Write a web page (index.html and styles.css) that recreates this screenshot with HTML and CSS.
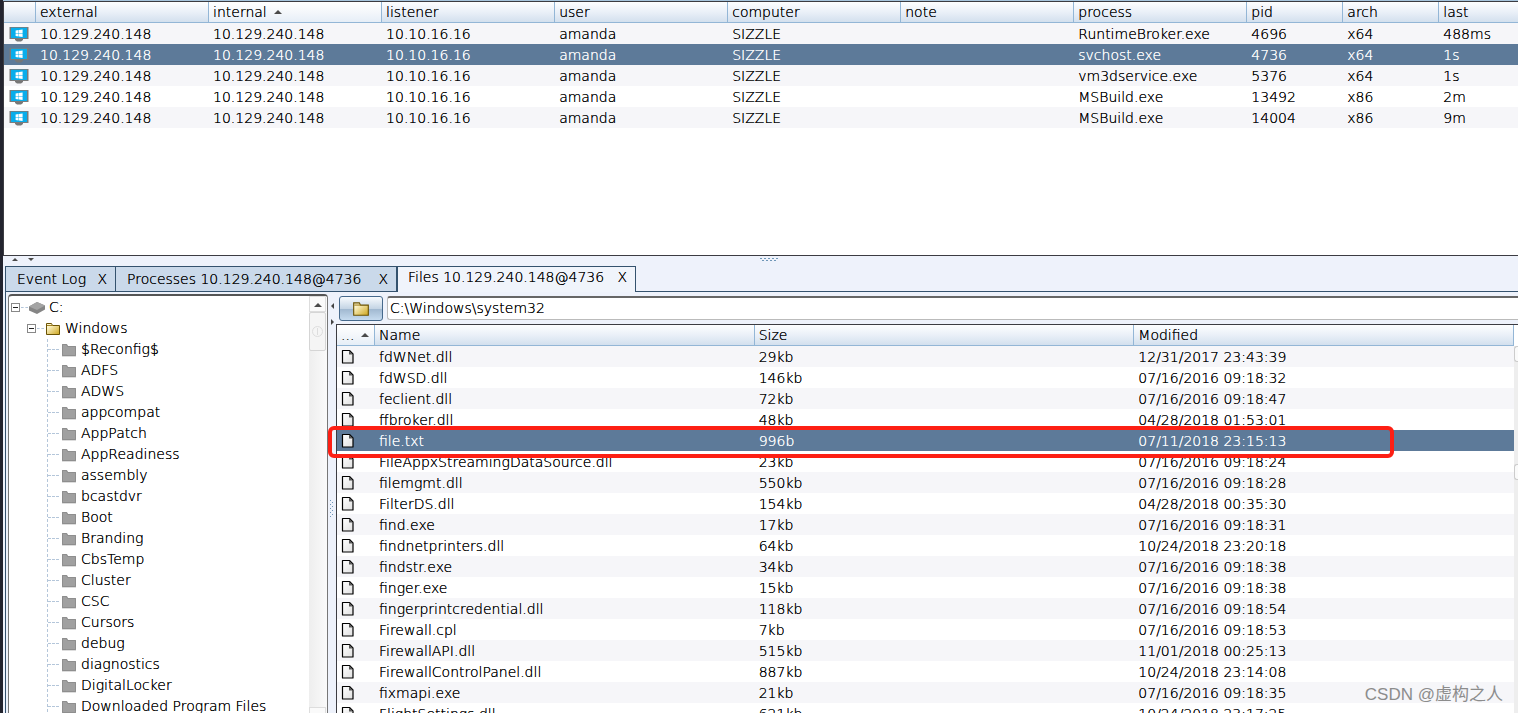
FILE: index.html
```html
<!DOCTYPE html>
<html lang="en">
<head>
<meta charset="utf-8">
<title>Beacons</title>
<link rel="stylesheet" href="styles.css">
</head>
<body>
<svg class="defs" aria-hidden="true">
  <defs>
    <linearGradient id="gold" x1="0" y1="0" x2="1" y2="1"><stop offset="0.200" stop-color="#fdf6cf"/><stop offset="1" stop-color="#cda51c"/></linearGradient>
    <linearGradient id="paper" x1="0" y1="0" x2="1" y2="1"><stop offset="0" stop-color="#fff"/><stop offset="1" stop-color="#e0e0e0"/></linearGradient>
  </defs>
  <symbol id="host" viewBox="0 0 20 16">
    <path d="M6 12h8v2l-2 1.600H8L6 14z" fill="#777"/>
    <rect x="0.500" y="1" width="19" height="12" fill="#7b7b7b"/>
    <rect x="2" y="1.800" width="16" height="10.200" fill="#09adeb"/>
    <path d="M6.600 4.600l3-.5v2.900h-3zM10 4l3.600-.6v3.600H10zM6.600 7.500h3v2.900l-3-.5zM10 7.500h3.600v3.600l-3.600-.6z" fill="#fff"/>
  </symbol>
  <symbol id="folder-gold" viewBox="0 0 16 14">
    <path d="M1.500 12.500v-11h5l1 2h7v9z" fill="url(#gold)" stroke="#6b5304"/>
    <path d="M2 3.500h6" stroke="#a28322"/>
  </symbol>
  <symbol id="folder-gray" viewBox="0 0 16 14">
    <path d="M1 13V1h5l1 2h8v10z" fill="#a0a0a0"/>
    <path d="M1.500 12.500v-11h4l1 2h8v9z" fill="none" stroke="#8e8e8e"/>
    <path d="M1 13.500h14" stroke="#ddd"/>
  </symbol>
  <symbol id="drive" viewBox="0 0 16 14">
    <path d="M0 5.500l8-4.500 8 3.500v4L8 13 0 9.500z" fill="#858585"/>
    <path d="M0 5.500l8-4.500 8 3.500L8 9z" fill="#a4a4a4"/>
  </symbol>
  <symbol id="file" viewBox="0 0 14 16">
    <path d="M1.500 1.500h7l3.500 3.500v9h-10.500z" fill="url(#paper)" stroke="#000" stroke-width="1.200" stroke-linejoin="round"/>
    <path d="M8 1.500v4h4z" fill="#555"/>
  </symbol>
  <symbol id="dots-h" viewBox="0 0 18 4">
    <path d="M0 .5h18" stroke="#6f97b8" stroke-dasharray="2 2"/>
    <path d="M2 2.500h16" stroke="#6f97b8" stroke-dasharray="2 2"/>
  </symbol>
  <symbol id="dots-v" viewBox="0 0 4 18">
    <path d="M.5 0v18" stroke="#6f97b8" stroke-dasharray="1 3"/>
    <path d="M2.500 2v16" stroke="#6f97b8" stroke-dasharray="1 3"/>
  </symbol>
</svg>
<main class="app">
  <section class="sessions">
    <table class="grid">
      <colgroup><col class="c-icon"><col class="c-wide" span="7"><col class="c-mid" span="2"><col></colgroup>
      <thead><tr><th></th><th>external</th><th class="sorted">internal<i class="tri up"></i></th><th>listener</th><th>user</th><th>computer</th><th>note</th><th>process</th><th>pid</th><th>arch</th><th>last</th></tr></thead>
      <tbody id="sessions"></tbody>
    </table>
  </section>
  <div class="splitter"><i class="tri up"></i><i class="tri down"></i><svg class="grip"><use href="#dots-h"/></svg></div>
  <nav class="tabs">
    <div class="tab t-log"><span>Event Log</span><button aria-label="Close Event Log">X</button></div>
    <div class="tab t-proc"><span>Processes 10.129.240.148@4736</span><button aria-label="Close Processes">X</button></div>
    <div class="tab t-files active"><span>Files 10.129.240.148@4736</span><button aria-label="Close Files">X</button></div>
    <div class="rest"></div>
  </nav>
  <section class="pane">
    <aside class="tree">
      <ul class="root">
        <li><div class="node"><button class="toggle" aria-label="Collapse C:"></button><i class="dash"></i><svg><use href="#drive"/></svg>C:</div>
          <ul class="level">
            <li><div class="node"><button class="toggle" aria-label="Collapse Windows"></button><i class="dash"></i><svg><use href="#folder-gold"/></svg>Windows</div>
              <ul class="leaves" id="folders"></ul>
            </li>
          </ul>
        </li>
      </ul>
      <div class="scroll"><button class="arrow" aria-label="Scroll up"><i class="tri up"></i></button><div class="thumb"></div><button class="arrow end" aria-label="Scroll down"></button></div>
    </aside>
    <div class="vsplit"><i class="side left"></i><i class="side right"></i><svg class="vgrip"><use href="#dots-v"/></svg></div>
    <section class="files">
      <div class="path"><button class="open" aria-label="Open folder"><svg><use href="#folder-gold"/></svg></button><input aria-label="Path" value="C:\Windows\system32"></div>
      <div class="list">
        <table class="grid">
          <colgroup><col class="c-type"><col><col><col></colgroup>
          <thead><tr><th class="sorted">...<i class="tri up"></i></th><th>Name</th><th>Size</th><th>Modified</th></tr></thead>
          <tbody id="files"></tbody>
        </table>
        <div class="gutter"><span></span><b></b></div>
        <div class="mark"></div>
      </div>
    </section>
  </section>
</main>
<div class="watermark">CSDN @虚构之人</div>
<script src="app.js"></script>
</body>
</html>
```

FILE: styles.css
```css
* { box-sizing: border-box; }
body {
  margin: 0;
  height: 100vh;
  overflow: hidden;
  background: #23242f;
  color: #000;
  font: 14px/21px "DejaVu Sans Light", "DejaVu Sans", sans-serif;
}
ul { list-style: none; margin: 0; padding: 0; }
button, input { font: inherit; color: inherit; padding: 0; margin: 0; }
.app, button, input { text-shadow: 0 0 0 currentColor; }
.defs { position: absolute; width: 0; height: 0; }
.app {
  height: 100vh;
  margin-left: 3px;
  display: flex;
  flex-direction: column;
  background: #eef2fb;
  border-top: 1px solid #a6c4dc;
}
.sessions {
  flex: 0 0 255px;
  overflow: hidden;
  background: #fff;
  border: 1px solid #3c3c42;
  border-width: 1px 0 1px 1px;
}
.grid { width: 100%; table-layout: fixed; border-collapse: separate; border-spacing: 0; }
.grid th {
  height: 21px;
  padding: 0 0 0 4px;
  line-height: 20px;
  text-align: left;
  font-weight: normal;
  white-space: nowrap;
  border-right: 1px solid #93b6d6;
  border-bottom: 1px solid #93b6d6;
  background: linear-gradient(#fdfeff, #eaf0f8 50%, #d3e0ee);
}
.sessions th:last-child { border-right: 0; }
.grid th.sorted { background: linear-gradient(#fff, #f4f7fb 50%, #e6eef7); }
.grid td { height: 21px; padding: 2px 0 0 4px; line-height: 19px; white-space: nowrap; }
.grid td:first-child { padding: 0 0 0 5px; }
.list .grid td:first-child { padding-left: 4px; }
.grid tbody tr:nth-child(odd) { background: #f6f6f9; }
.grid tbody tr.selected { background: #5d7a99; color: #fff; text-shadow: 0 0 0 #fff; }
.grid svg { display: block; }
.host { width: 20px; height: 16px; }
.file { width: 14px; height: 16px; }
.c-icon { width: 32px; }
.c-wide { width: 11.43%; }
.c-mid { width: 6.34%; }
.c-type { width: 38px; }
.tri { display: inline-block; border: 4px solid transparent; border-top: 0; border-bottom: 4px solid #4a4a4a; vertical-align: 3px; }
.sorted .tri { margin-left: 7px; }
.tri.down { border-bottom: 0; border-top: 4px solid #4a4a4a; }
.splitter { flex: 0 0 10px; display: flex; align-items: flex-start; gap: 10px; padding: 2px 24px 0 9px; }
.splitter .tri { border-left-width: 3px; border-right-width: 3px; border-bottom-width: 3px; }
.splitter .tri.down { border-bottom-width: 0; border-top-width: 3px; }
.grip { width: 18px; height: 4px; margin: 0 auto; }
.tabs { flex: 0 0 26px; display: flex; padding-left: 2px; }
.tab {
  display: flex;
  justify-content: space-between;
  padding: 2px 8px 0 11px;
  background: #cad9ea;
  border: 1px solid #34526e;
  border-right-width: 0;
  white-space: nowrap;
}
.t-log { min-width: 110px; }
.t-proc { min-width: 281px; }
.t-files { min-width: 240px; }
.tab button { border: 0; background: none; line-height: 21px; align-self: flex-start; }
.tab.active { padding: 0 8px 0 10px; background: #f0f4fb; border-width: 1px 1px 0 2px; }
.rest { flex: 1; border-bottom: 1px solid #34526e; }
.pane { flex: 1; min-height: 0; margin-left: 2px; border-left: 1px solid #34526e; display: flex; padding: 2px 0 0 2px; }
.tree {
  flex: 0 0 320px;
  display: flex;
  background: #fff;
  border: 1px solid #777;
  border-top: 2px solid #555;
  border-bottom: 0;
  border-radius: 4px 4px 0 0;
  overflow: hidden;
}
.root { flex: 1; padding: 1px 0 0 2px; }
.node { display: flex; align-items: center; height: 21px; white-space: nowrap; }
.node svg { width: 16px; height: 14px; margin-right: 4px; flex: none; }
.toggle { width: 9px; height: 9px; border: 1px solid #888; background: linear-gradient(#222, #222) center / 5px 1px no-repeat #fff; }
.dash { width: 7px; margin: 0 1px; border-top: 1px dashed #b4c6da; }
.level { padding-left: 16px; }
.leaves { margin-left: 20px; border-left: 1px dashed #b4c6da; }
.leaves .dash { width: 11px; margin: 0 2px 0 0; }
.scroll { width: 18px; display: flex; flex-direction: column; padding-right: 1px; background: linear-gradient(90deg, #eee, #fafafa); }
.arrow { height: 16px; border: 1px solid #ddd; background: #fafafa; line-height: 10px; }
.arrow .tri { vertical-align: 2px; }
.thumb { height: 39px; display: flex; align-items: center; justify-content: center; border: 1px solid #d5d5d5; border-radius: 2px; background: #f5f5f5; }
.thumb::before { content: ""; width: 9px; height: 9px; border: 1px solid #ddd; border-radius: 50%; background: linear-gradient(#ddd, #ddd) center / 1px 7px no-repeat; }
.end { margin-top: auto; height: 6px; border-bottom: 0; }
.vsplit { flex: 0 0 8px; display: flex; flex-direction: column; align-items: center; gap: 10px; padding: 9px 0 30px; }
.side { border: 3px solid transparent; }
.side.left { border-left: 0; border-right-color: #444; }
.side.right { border-right: 0; border-left-color: #444; }
.vgrip { width: 4px; height: 18px; margin: auto 0; }
.files { flex: 1; min-width: 0; display: flex; flex-direction: column; }
.path { display: flex; gap: 4px; padding: 2px 0 3px 3px; }
.open {
  width: 44px;
  height: 25px;
  display: flex;
  align-items: center;
  justify-content: center;
  border: 1px solid #46698c;
  border-radius: 3px;
  background: linear-gradient(#f8fbfe, #c5d5e5 50%, #9fb7cf 51%, #c6dbef);
}
.open svg { width: 18px; height: 16px; }
.path input {
  flex: 1;
  min-width: 0;
  height: 24px;
  padding: 0 2px 1px;
  border: 1px solid #bbb;
  border-top: 2px solid #666;
  border-right: 0;
  border-radius: 3px 0 0 3px;
  background: #fff;
}
.list { position: relative; flex: 1; min-height: 0; display: flex; align-items: flex-start; background: #fff; border: 1px solid #3c3c42; border-width: 1px 0 0 1px; }
.list .grid { flex: 1; min-width: 0; }
.gutter { flex: 0 0 4px; align-self: stretch; background: #eee; border-top: 21px solid #fff; }
.gutter span, .gutter b { display: block; height: 16px; border: 1px solid #ccc; border-right: 0; border-radius: 3px 0 0 3px; background: #fafafa; }
.gutter b { margin-top: 102px; }
.mark { position: absolute; left: -9px; top: 101px; width: 1066px; height: 32px; border: 4px solid #fd1f14; border-radius: 6px; }
.watermark { position: absolute; right: 15px; bottom: 6px; color: #8c8c8c; font: 17px/24px "Liberation Sans", "Noto Sans CJK SC", sans-serif; }
```

FILE: app.js
```js
const ip = '10.129.240.148';
const sessions = [
  ['RuntimeBroker.exe', 4696, 'x64', '488ms'],
  ['svchost.exe', 4736, 'x64', '1s'],
  ['vm3dservice.exe', 5376, 'x64', '1s'],
  ['MSBuild.exe', 13492, 'x86', '2m'],
  ['MSBuild.exe', 14004, 'x86', '9m'],
];
const icon = (id) => `<svg class="${id}"><use href="#${id}"/></svg>`;
const row = (cells, selected) =>
  `<tr${selected ? ' class="selected"' : ''}>${cells.map((c) => `<td>${c}</td>`).join('')}</tr>`;

document.getElementById('sessions').innerHTML = sessions
  .map((s) => row([icon('host'), ip, ip, '10.10.16.16', 'amanda', 'SIZZLE', '', ...s], s[1] === 4736))
  .join('');

const folders = ['$Reconfig$', 'ADFS', 'ADWS', 'appcompat', 'AppPatch', 'AppReadiness', 'assembly', 'bcastdvr',
  'Boot', 'Branding', 'CbsTemp', 'Cluster', 'CSC', 'Cursors', 'debug', 'diagnostics', 'DigitalLocker',
  'Downloaded Program Files'];
document.getElementById('folders').innerHTML = folders
  .map((f) => `<li class="node"><i class="dash"></i><svg><use href="#folder-gray"/></svg>${f}</li>`)
  .join('');

const files = [
  ['fdWNet.dll', '29kb', '12/31/2017 23:43:39'],
  ['fdWSD.dll', '146kb', '07/16/2016 09:18:32'],
  ['feclient.dll', '72kb', '07/16/2016 09:18:47'],
  ['ffbroker.dll', '48kb', '04/28/2018 01:53:01'],
  ['file.txt', '996b', '07/11/2018 23:15:13'],
  ['FileAppxStreamingDataSource.dll', '23kb', '07/16/2016 09:18:24'],
  ['filemgmt.dll', '550kb', '07/16/2016 09:18:28'],
  ['FilterDS.dll', '154kb', '04/28/2018 00:35:30'],
  ['find.exe', '17kb', '07/16/2016 09:18:31'],
  ['findnetprinters.dll', '64kb', '10/24/2018 23:20:18'],
  ['findstr.exe', '34kb', '07/16/2016 09:18:38'],
  ['finger.exe', '15kb', '07/16/2016 09:18:38'],
  ['fingerprintcredential.dll', '118kb', '07/16/2016 09:18:54'],
  ['Firewall.cpl', '7kb', '07/16/2016 09:18:53'],
  ['FirewallAPI.dll', '515kb', '11/01/2018 00:25:13'],
  ['FirewallControlPanel.dll', '887kb', '10/24/2018 23:14:08'],
  ['fixmapi.exe', '21kb', '07/16/2016 09:18:35'],
  ['FlightSettings.dll', '621kb', '10/24/2018 23:17:25'],
];
document.getElementById('files').innerHTML = files
  .map((f) => row([icon('file'), ...f], f[0] === 'file.txt'))
  .join('');
```
